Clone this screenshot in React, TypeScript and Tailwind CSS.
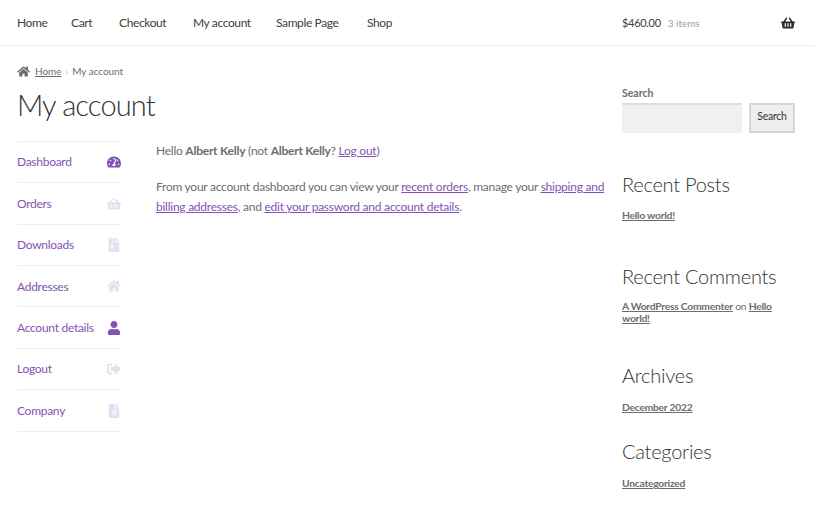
import { FaTachometerAlt, FaShoppingBasket, FaFileArchive, FaHome, FaUser, FaSignOutAlt, FaFileAlt } from "react-icons/fa";

const navLinks = ["Home", "Cart", "Checkout", "My account", "Sample Page", "Shop"];
const gaps = ["w-[28px]", "w-[22px]", "w-[48px]", "w-[57px]", "w-[65px]", "w-[26px]"];

const accountLinks = [
  { label: "Dashboard", Icon: FaTachometerAlt, active: true, h: "h-[41px]", pad: "pb-[1px]" },
  { label: "Orders", Icon: FaShoppingBasket, active: false, h: "h-[42px]", pad: "pt-[1px]" },
  { label: "Downloads", Icon: FaFileArchive, active: false, h: "h-[41px]", pad: "pb-[1px]" },
  { label: "Addresses", Icon: FaHome, active: false, h: "h-[41px]", pad: "pt-[1px]" },
  { label: "Account details", Icon: FaUser, active: true, h: "h-[42px]", pad: "pt-[1px]" },
  { label: "Logout", Icon: FaSignOutAlt, active: false, h: "h-[41px]", pad: "pb-[1px]" },
  { label: "Company", Icon: FaFileAlt, active: false, h: "h-[42px]", pad: "pt-[1px]" },
];

function WidgetTitle({ children }: { children: string }) {
  return <h3 className="text-[20px] tracking-[-0.25px] leading-[26px] font-light text-[#333333]">{children}</h3>;
}

function WidgetLink({ children }: { children: string }) {
  return <a className="font-bold underline text-[#6d6d6d]">{children}</a>;
}

export default function App() {
  return (
    <div className="w-[814px] h-[508px] overflow-hidden bg-white text-[#6d6d6d] text-[12px] tracking-[-0.25px] font-['Lato','Liberation_Sans',sans-serif]">
      <header className="h-[46px] border-b border-[#eeeeee] pl-[17px] pr-[19px] flex items-center">
        <nav className="flex gap-[26px] w-[605px] text-[#404040] tracking-[-0.38px]">
          {navLinks.map((l, i) => (
            <a key={l} className={gaps[i] + " whitespace-nowrap"}>{l}</a>
          ))}
        </nav>
        <div className="flex-1 flex items-center pt-[1px]">
          <span className="text-[11px] tracking-[-0.3px] text-[#404040]">$460.00</span>
          <span className="ml-[7px] text-[10px] tracking-[-0.05px] text-[#a0a0a0]">3 items</span>
          <FaShoppingBasket className="ml-auto text-[14px] text-[#2c2d33]" />
        </div>
      </header>

      <div className="flex pl-[17px] pr-[19px]">
        <main className="w-[605px]">
          <div className="pt-[18px] flex items-center h-[32px] text-[10px] tracking-[-0.05px] text-[#6d6d6d]">
            <FaHome className="text-[13px] mr-[5px]" />
            <a className="underline">Home</a>
            <span className="mx-[4px] text-[#bbbbbb]">›</span>
            <span>My account</span>
          </div>
          <h1 className="mt-[8px] text-[29px] tracking-[-0.85px] leading-[38px] font-light text-[#333333]">My account</h1>
          <div className="flex mt-[17px]">
            <ul className="w-[104px] border-t border-[#eeeeee]">
              {accountLinks.map(({ label, Icon, active, h, pad }) => (
                <li key={label} className={h + " flex items-center justify-between border-b border-[#eeeeee] text-[#7f54b3]"}>
                  <span className={pad + " tracking-[-0.28px]"}>{label}</span>
                  <Icon className={(active ? "text-[#7f54b3]" : "text-[#e5ddf0]") + " text-[14px]"} />
                </li>
              ))}
            </ul>
            <div className="ml-[35px] w-[452px] leading-[20px]">
              <p>
                Hello <b>Albert Kelly</b> (not <b>Albert Kelly</b>? <a className="underline text-[#7f54b3]">Log out</a>)
              </p>
              <p className="mt-[16px]">
                From your account dashboard you can view your <a className="underline text-[#7f54b3]">recent orders</a>, manage your <a className="underline text-[#7f54b3]">shipping and billing addresses</a>, and <a className="underline text-[#7f54b3]">edit your password and account details</a>.
              </p>
            </div>
          </div>
        </main>

        <aside className="flex-1 pt-[41px] text-[10.3px] tracking-[-0.25px]">
          <label className="block font-bold leading-[13px] text-[10.5px] tracking-normal">Search</label>
          <div className="flex mt-[3px] gap-[7px]">
            <div className="w-[120px] h-[30px] bg-[#f0f0f0] border-t-2 border-[#dddddd]"></div>
            <button className="w-[46px] h-[30px] pb-[2px] bg-[#eeeeee] border-2 border-[#d6d6d6] text-[10.5px] text-[#333333]">Search</button>
          </div>
          <div className="mt-[38px]">
            <WidgetTitle>Recent Posts</WidgetTitle>
            <p className="mt-[12px] leading-[13px]"><WidgetLink>Hello world!</WidgetLink></p>
          </div>
          <div className="mt-[41px]">
            <WidgetTitle>Recent Comments</WidgetTitle>
            <p className="mt-[11px] leading-[12px]"><WidgetLink>A WordPress Commenter</WidgetLink> on <WidgetLink>Hello world!</WidgetLink></p>
          </div>
          <div className="mt-[38px]">
            <WidgetTitle>Archives</WidgetTitle>
            <p className="mt-[13px] leading-[13px]"><WidgetLink>December 2022</WidgetLink></p>
          </div>
          <div className="mt-[24px]">
            <WidgetTitle>Categories</WidgetTitle>
            <p className="mt-[13px] leading-[13px]"><WidgetLink>Uncategorized</WidgetLink></p>
          </div>
        </aside>
      </div>
    </div>
  );
}
